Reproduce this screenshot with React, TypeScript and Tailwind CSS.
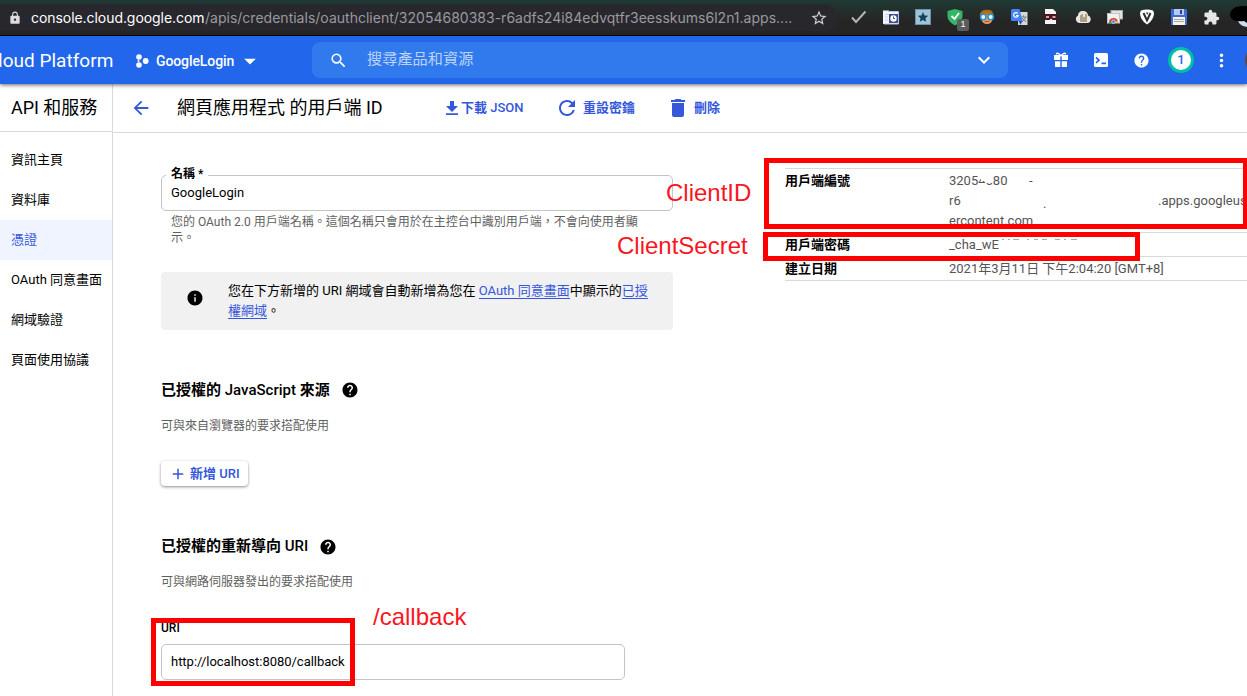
import type { ReactNode } from "react";
import {
  MdAdd,
  MdArrowBack,
  MdArrowDropDown,
  MdCheck,
  MdDelete,
  MdExpandMore,
  MdExtension,
  MdHelp,
  MdInfo,
  MdLock,
  MdMoreVert,
  MdRefresh,
  MdSearch,
  MdStarBorder,
} from "react-icons/md";

const NAV = ["資訊主頁", "資料庫", "憑證", "OAuth 同意畫面", "網域驗證", "頁面使用協議"];

function Cell({ children }: { children: ReactNode }) {
  return <div className="relative flex w-8 shrink-0 items-center justify-center">{children}</div>;
}

function Extensions() {
  return (
    <div className="flex h-[34px]">
      <Cell>
        <svg width="16" height="14" viewBox="0 0 16 14" fill="none" stroke="#b4b4b4" strokeWidth="2">
          <path d="M1 7.500l4 4.500L14.500 1.500" />
        </svg>
      </Cell>
      <Cell>
        <svg width="16" height="16" viewBox="0 0 16 16">
          <path d="M0 2l1-1 1 1 1-1 1 1 1-1 1 1h9v13H0z" fill="#f2f5fb" />
          <path d="M5 2.500h10.500V15H1" stroke="#b9c4e8" fill="none" />
          <path d="M2 5.500h12M2 8h3M2 11h3" stroke="#ccd4ea" />
          <rect x="6" y="5" width="9" height="9" fill="#3b5090" />
          <circle cx="10.500" cy="9.500" r="3.200" fill="#fff" />
          <path d="M10.500 7.500v2H12" stroke="#3b5090" fill="none" />
        </svg>
      </Cell>
      <Cell>
        <svg width="16" height="16" viewBox="0 0 16 16">
          <rect width="16" height="16" fill="#6e93a8" />
          <rect x="1" y="1" width="14" height="14" fill="#9cc3da" />
          <path d="M8 3l1.500 3.400 3.700.4-2.800 2.400.8 3.600L8 11l-3.200 1.800.8-3.600-2.800-2.400 3.700-.4z" fill="#163f58" />
        </svg>
      </Cell>
      <Cell>
        <svg width="16" height="18" viewBox="0 0 16 18">
          <path d="M8 1l7.500 2v5c0 4-3 7-7.500 9.500C3.500 15 .5 12 .5 8V3z" fill="#35b566" />
          <path d="M4.500 8l3 3L12 5" stroke="#fff" strokeWidth="1.800" fill="none" />
        </svg>
        <span className="absolute left-[18px] top-[19px] flex h-3 w-3 items-center justify-center rounded-[2px] bg-[#5c5c5c] font-['Liberation_Sans'] text-[9px] text-white">
          1
        </span>
      </Cell>
      <Cell>
        <svg width="16" height="16" viewBox="0 0 16 16">
          <path d="M1 8C0 3 4 0 8 1c5-1 7 3 6 7z" fill="#a8661a" />
          <circle cx="8" cy="9.500" r="5.500" fill="#e9a566" />
          <path d="M2 6C3 3 7 1 10 3l4 3z" fill="#b9721d" />
          <circle cx="4.300" cy="8" r="2.700" fill="#f1f8fc" stroke="#2496d4" strokeWidth="1.600" />
          <circle cx="11.700" cy="8" r="2.700" fill="#f1f8fc" stroke="#2496d4" strokeWidth="1.600" />
          <path d="M5.500 12.500h5" stroke="#d84a35" strokeWidth="1.300" />
        </svg>
      </Cell>
      <Cell>
        <svg width="17" height="17" viewBox="0 0 17 17">
          <rect x="7" y="3" width="9.500" height="13" fill="#d7d7d7" />
          <path d="M10 8h5.500M12.500 6.500V8M15 8l-4 5M11 9l4 4" stroke="#6c7f93" fill="none" />
          <path d="M1 0h7.500l3 12H1a1 1 0 0 1-1-1V1z" fill="#4382f4" />
          <path d="M7.500 12h4l-2 4z" fill="#3457b5" />
          <path d="M6.800 4.500a2.300 2.300 0 1 0 .4 2H5" stroke="#fff" strokeWidth="1.200" fill="none" />
        </svg>
      </Cell>
      <Cell>
        <svg width="16" height="16" viewBox="0 0 16 16">
          <path d="M2 0h8l3 3v12H2z" fill="#f3f3f3" />
          <path d="M0 5h15l-1 6H9.500L8 9.500 6.500 11H1z" fill="#4d1519" />
          <path d="M3 8h3M9.500 8h3" stroke="#e9dcdc" strokeWidth="1.500" />
        </svg>
      </Cell>
      <Cell>
        <svg width="16" height="16" viewBox="0 0 16 16">
          <path d="M4 14a4 4 0 0 1-1-7.500C3 3 6 1.500 8 2c3 0 5 2 5 4.500 4 1 3.500 7.500-1 7.500z" fill="#e8e6e3" />
          <path d="M5 6.500L7 5h5v8H5z" fill="#b0a085" />
          <path d="M8 5h2v3H8z" fill="#eee5d5" />
        </svg>
      </Cell>
      <Cell>
        <svg width="16" height="16" viewBox="0 0 16 16">
          <rect x="4" y="1.500" width="11.500" height="8.500" fill="#e2e2e2" stroke="#aaa" />
          <rect x=".5" y="4.500" width="12" height="9.500" fill="#f1f1f1" stroke="#c4c4c4" />
          <path d="M2 13.500a4.500 4.500 0 0 1 9 0z" fill="#df3d30" />
          <path d="M2.300 11.500L6.500 14H2z" fill="#32a354" />
          <path d="M10.700 11.500L6.500 14H11z" fill="#f3c62d" />
          <circle cx="6.500" cy="12.700" r="1.800" fill="#4384ee" stroke="#fff" strokeWidth=".6" />
        </svg>
      </Cell>
      <Cell>
        <svg width="16" height="16" viewBox="0 0 16 16">
          <path d="M2 1.500Q8-.5 14 1.500L15 4q0 7-7 11.500Q1 11 1 4z" fill="#fff" />
          <path d="M4.500 4l3.500 7.500L11.500 4" stroke="#2d2d2d" strokeWidth="2" fill="none" />
          <path d="M7 3.500h2.500L8.200 6z" fill="#2d2d2d" />
        </svg>
      </Cell>
      <Cell>
        <svg width="16" height="16" viewBox="0 0 16 16">
          <path d="M0 0h15l1 1v15H0z" fill="#3f6bd4" />
          <rect x="3" y="0" width="10" height="6" fill="#b9caf0" />
          <rect x="9" y="1" width="2" height="4" fill="#20409a" />
          <rect x="2" y="8" width="12" height="8" fill="#f4f4ee" />
          <path d="M3 10.500h10M3 12.500h10" stroke="#a8a8a0" />
        </svg>
      </Cell>
      <Cell>
        <MdExtension className="size-[17px] text-[#e6e6e6]" />
      </Cell>
      <Cell>
        <svg width="28" height="28" viewBox="0 0 28 28" className="shrink-0">
          <circle cx="18" cy="14" r="10" fill="#cfdcf0" />
          <path d="M1 11C3 3 10 3 16 3h12v18c-7 2-10-1-13-3C9 19 1 18 1 11z" fill="#000" />
        </svg>
      </Cell>
    </div>
  );
}

function BrowserBar() {
  return (
    <div className="flex h-9 shrink-0 border-b border-black bg-linear-to-b from-[#1e3a34] to-[#252525] to-60%">
      <div className="mt-1 flex h-[27px] w-[837px] shrink-0 items-center rounded-r-full bg-[#29272e] font-['Inter'] text-[14px]">
        <MdLock className="ml-2 size-[14px] shrink-0 text-[#dcdcdc]" />
        <div className="-mt-px ml-[9px] w-[779px] whitespace-nowrap text-[#9a999d]">
          <span className="inline-block w-[174px] tracking-[-0.060px] text-white">console.cloud.google.com</span>
          <span className="tracking-[0.010px]">
            /apis/credentials/oauthclient/32054680383-r6adfs24i84edvqtfr3eesskums6l2n1.apps....
          </span>
        </div>
        <MdStarBorder className="size-[18px] shrink-0 text-[#cfcfcf]" />
      </div>
      <div className="ml-[6px]">
        <Extensions />
      </div>
    </div>
  );
}

function HeaderCell({ children }: { children: ReactNode }) {
  return <div className="flex w-10 shrink-0 items-center justify-center">{children}</div>;
}

function ConsoleHeader() {
  return (
    <div className="relative z-10 flex h-12 shrink-0 bg-[#2166eb] text-white shadow-[0_1px_4px_rgba(0,0,0,0.6)]">
      <div className="flex w-[312px] shrink-0 items-center whitespace-nowrap pt-[2px]">
        <span className="-ml-[2px] w-[137px] text-[19px] tracking-[0.02px]">loud Platform</span>
        <svg width="14" height="14" viewBox="0 0 14 14" fill="currentColor">
          <circle cx="4" cy="3" r="2.800" />
          <circle cx="4" cy="11" r="2.800" />
          <circle cx="10.700" cy="7" r="2.900" />
          <circle cx="3.500" cy="7" r="1" />
        </svg>
        <span className="ml-[7px] w-[79px] text-[14px] font-medium tracking-[-0.1px]">GoogleLogin</span>
        <MdArrowDropDown className="ml-px size-[28px]" />
      </div>
      <div className="mt-[6px] flex h-9 w-[696px] shrink-0 items-center rounded-lg bg-[#317aee]">
        <MdSearch className="ml-[17px] size-[19px]" />
        <span className="-mt-[2px] ml-[19px] flex-1 text-[15.200px] text-[#bdd4fa]">搜尋產品和資源</span>
        <MdExpandMore className="mr-[12px] size-6" />
      </div>
      <div className="ml-[33px] flex">
        <HeaderCell>
          <svg width="14" height="16" viewBox="0 0 14 16" fill="currentColor">
            <path d="M0 3h6.300v5H0zM7.700 3H14v5H7.700zM1 9.300h5.300V15H1zM7.700 9.300H13V15H7.700z" />
            <path d="M7 4C5 1 2.500.5 2.500 2.500M7 4c2-3 4.500-3.500 4.500-1.500" stroke="currentColor" strokeWidth="1.500" fill="none" />
          </svg>
        </HeaderCell>
        <HeaderCell>
          <svg width="14" height="14" viewBox="0 0 14 14">
            <rect width="14" height="14" rx="1.500" fill="#fff" />
            <path d="M2 4.500L5 7.200 2 10M7.500 10.300H12" stroke="#2166eb" strokeWidth="1.700" fill="none" />
          </svg>
        </HeaderCell>
        <HeaderCell>
          <MdHelp className="size-[17px]" />
        </HeaderCell>
        <HeaderCell>
          <div className="flex size-[26px] items-center justify-center rounded-full border-[3px] border-[#00bfa5] bg-white text-[13px] font-medium text-[#2166eb]">
            1
          </div>
        </HeaderCell>
        <HeaderCell>
          <MdMoreVert className="size-[21px]" />
        </HeaderCell>
        <div className="ml-[4px] mt-3 size-6 shrink-0 rounded-full bg-[#5b4a3c]" />
      </div>
    </div>
  );
}

function Sidebar() {
  return (
    <div className="w-[113px] shrink-0 border-r border-[#dadada]">
      <div className="flex h-12 items-center whitespace-nowrap border-b border-[#dadada] pb-px pl-[11px] text-[18px] tracking-[-0.05px]">
        API 和服務
      </div>
      <div className="mt-2 flex flex-col text-[13px]">
        {NAV.map((label) => (
          <div
            key={label}
            className={
              label === "憑證"
                ? "flex h-10 items-center whitespace-nowrap bg-[#f0f4ff] pl-[11px] text-[#3557dc]"
                : "flex h-10 items-center whitespace-nowrap pl-[11px]"
            }
          >
            {label}
          </div>
        ))}
      </div>
    </div>
  );
}

function Toolbar() {
  return (
    <div className="flex h-[49px] shrink-0 items-center whitespace-nowrap border-b border-[#dadada] text-[13px] font-medium text-[#3557dc]">
      <MdArrowBack className="ml-[17px] size-[22px]" />
      <div className="-mt-px ml-[25px] w-[269px] text-[18px] font-normal text-black">網頁應用程式 的用戶端 ID</div>
      <svg width="12" height="14" viewBox="0 0 12 14" fill="currentColor">
        <path d="M4 0h4v5h4l-6 6-6-6h4zM0 12.300h12V14H0z" />
      </svg>
      <span className="ml-[3px] w-[94px]">
        <b className="font-bold">下載</b> JSON
      </span>
      <MdRefresh className="size-6" />
      <span className="ml-[4px] w-[83px] font-bold">重設密鑰</span>
      <MdDelete className="size-6" />
      <span className="ml-[4px] font-bold">刪除</span>
    </div>
  );
}

function Details() {
  return (
    <div className="ml-28 mt-[35px] w-[480px] shrink-0 text-[13px] leading-5 text-[#555]">
      <div className="flex h-[65px] border-y border-[#dadada] pt-[2px]">
        <div className="w-[164px] shrink-0 font-bold text-black">用戶端編號</div>
        <div className="whitespace-nowrap">
          <div className="relative">
            <span className="inline-block w-[80px]">32054680</span>-
            <span className="absolute left-[32px] top-[3px] h-[7px] w-[12px] bg-white" />
            <span className="absolute left-[30px] top-[12px] h-[4px] w-[7px] bg-white" />
            <span className="absolute left-[36px] top-[3px] h-[9px] w-[8px] bg-white" />
          </div>
          <div>
            <span className="inline-block w-[94px]">r6</span>
            <span className="inline-block w-[115px] translate-y-[3px]">.</span>
            .apps.googleus
          </div>
          <div>ercontent.com</div>
        </div>
      </div>
      <div className="flex h-6 border-b border-[#dadada] pt-[2px]">
        <div className="w-[164px] shrink-0 font-bold text-black">用戶端密碼</div>
        <span>_cha_wE</span>
        <svg width="80" height="8" viewBox="0 0 80 8" className="ml-[2px] mt-[3px]" stroke="#aaa">
          <path d="M1 1.500h2m4 0h2m3 0h6M26 1.500h2m5 0h4m4 0h5M54 1.500h5m4 0h2m5 0h6" />
        </svg>
      </div>
      <div className="flex h-6 border-b border-[#dadada] pt-[2px]">
        <div className="w-[164px] shrink-0 font-bold text-black">建立日期</div>
        <span className="whitespace-nowrap">2021年3月11日 下午2:04:20 [GMT+8]</span>
      </div>
    </div>
  );
}

function Form() {
  return (
    <div className="ml-12 w-[512px] shrink-0 whitespace-nowrap">
      <div className="relative mt-[42px] flex h-9 items-center rounded-[5px] border border-[#c4c4c4] pl-[9px] text-[13px]">
        <span className="absolute -top-[10px] left-1 bg-white px-[5px] text-[12px] font-medium leading-4">
          <b className="font-bold">名稱</b> *
        </span>
        GoogleLogin
      </div>
      <div className="mt-[3px] pl-[10px] text-[12px] leading-4 text-[#5f5f5f]">
        <div>您的 OAuth 2.0 用戶端名稱。這個名稱只會用於在主控台中識別用戶端，不會向使用者顯</div>
        <div>示。</div>
      </div>
      <div className="mt-[26px] flex h-[58px] rounded bg-[#f1f1f1] text-[13px]">
        <MdInfo className="ml-[25px] mt-[17px] size-[18px] shrink-0" />
        <div className="ml-6 mt-[9px] leading-5">
          <div>
            您在下方新增的 URI 網域會自動新增為您在{" "}
            <span className="border-b border-[#3557dc] text-[#3557dc]">OAuth 同意畫面</span>
            中顯示的<span className="border-b border-[#3557dc] text-[#3557dc]">已授</span>
          </div>
          <div>
            <span className="border-b border-[#3557dc] text-[#3557dc]">權網域</span>。
          </div>
        </div>
      </div>
      <div className="mt-[50px] flex h-5 items-center text-[15px] font-medium">
        <span>
          <b className="font-bold">已授權的</b> JavaScript <b className="font-bold">來源</b>
        </span>
        <MdHelp className="ml-[11px] size-[18px]" />
      </div>
      <div className="mt-[17px] h-[18px] text-[12px] leading-[18px] text-[#5f5f5f]">可與來自瀏覽器的要求搭配使用</div>
      <div className="mt-[26px] flex h-[25px] w-[87px] items-center rounded bg-white pl-2 text-[13px] font-medium text-[#3557dc] shadow-[0_1px_3px_rgba(0,0,0,0.45)]">
        <MdAdd className="mr-[3px] size-[18px]" />
        <span>
          <b className="font-bold">新增</b> URI
        </span>
      </div>
      <div className="mt-[50px] flex h-5 items-center text-[15px] font-medium">
        <span>
          <b className="font-bold">已授權的重新導向</b> URI
        </span>
        <MdHelp className="ml-[11px] mt-[2px] size-[18px]" />
      </div>
      <div className="mt-[17px] h-[18px] text-[12px] leading-[18px] text-[#5f5f5f]">可與網路伺服器發出的要求搭配使用</div>
      <div className="mt-[29px] h-4 text-[12px] font-medium leading-4">URI</div>
      <div className="mt-[8px] flex h-9 w-[464px] items-center rounded-[5px] border border-[#c4c4c4] pl-[9px] text-[13px] tracking-[-0.02px]">
        http://localhost:8080/callback
      </div>
    </div>
  );
}

function Annotations() {
  return (
    <div className="pointer-events-none absolute inset-0 z-20 overflow-hidden whitespace-nowrap font-['Liberation_Sans'] text-[24px] leading-7 text-[#fb1522]">
      <div className="absolute left-[764px] top-[158px] h-[71px] w-[484px] border-[5px] border-[#fe0000]" />
      <div className="absolute left-[763px] top-[232px] h-[29px] w-[377px] border-[5px] border-[#fe0000]" />
      <div className="absolute left-[151px] top-[618px] h-[68px] w-[204px] border-[5px] border-[#fe0000]" />
      <div className="absolute left-[666px] top-[179px]">ClientID</div>
      <div className="absolute left-[617px] top-[232px]">ClientSecret</div>
      <div className="absolute left-[373px] top-[603px]">/callback</div>
    </div>
  );
}

export default function App() {
  return (
    <div
      lang="zh-Hant"
      className="relative flex h-[696px] w-[1247px] flex-col overflow-hidden bg-white font-['Roboto','Noto_Sans_CJK_TC',sans-serif] text-black"
    >
      <BrowserBar />
      <ConsoleHeader />
      <div className="flex min-h-0 flex-1">
        <Sidebar />
        <div className="flex min-w-0 flex-1 flex-col">
          <Toolbar />
          <div className="flex min-h-0 flex-1 overflow-hidden">
            <Form />
            <Details />
          </div>
        </div>
      </div>
      <Annotations />
    </div>
  );
}
